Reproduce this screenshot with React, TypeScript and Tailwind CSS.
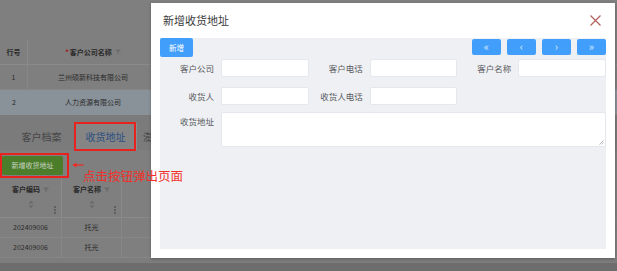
import React from 'react';

const font = "font-['Noto_Sans_CJK_SC','Noto_Sans',sans-serif]";

function SortIcon() {
  return (
    <svg width="6" height="9" viewBox="0 0 6 9" className="block">
      <path d="M3 0.5 L5.5 3.5 H0.5 Z" fill="#6a6a6a" />
      <path d="M3 8.5 L5.5 5.5 H0.5 Z" fill="#6a6a6a" />
    </svg>
  );
}

function FilterIcon() {
  return (
    <svg width="6" height="6" viewBox="0 0 6 6" className="inline-block ml-[3px]">
      <path d="M0 0.5 H6 L3.6 3.2 V5.6 L2.4 5 V3.2 Z" fill="#6c6c6c" />
    </svg>
  );
}

function Dots() {
  return (
    <svg width="2" height="8" viewBox="0 0 2 8" className="block">
      <circle cx="1" cy="1" r="0.8" fill="#3a3a3a" />
      <circle cx="1" cy="4" r="0.8" fill="#3a3a3a" />
      <circle cx="1" cy="7" r="0.8" fill="#3a3a3a" />
    </svg>
  );
}

function Field({ label, wide }: { label: string; wide?: boolean }) {
  return (
    <div className={`flex ${wide ? 'col-span-3 items-start' : 'items-center'}`}>
      <span
        className={`w-[61px] shrink-0 pr-[7px] text-right text-[8.5px] text-[#585a5e] leading-none ${
          wide ? 'pt-[5px]' : ''
        }`}
      >
        {label}
      </span>
      {wide ? (
        <div className="relative flex-1 h-[35px] bg-white border border-[#e4e7ed] rounded-[2px]">
          <svg width="5" height="5" viewBox="0 0 5 5" className="absolute right-[1px] bottom-[1px]">
            <path d="M4.5 0.5 L0.5 4.5 M4.5 2.5 L2.5 4.5" stroke="#9a9a9a" strokeWidth="0.7" />
          </svg>
        </div>
      ) : (
        <div className="flex-1 h-[18px] bg-white border border-[#e4e7ed] rounded-[2px]" />
      )}
    </div>
  );
}

export default function App() {
  const pager = ['«', '‹', '›', '»'];

  return (
    <div className={`relative w-[617px] h-[271px] overflow-hidden bg-[#7f7f7f] ${font}`}>
      {/* dimmed page underneath */}
      <div className="flex flex-col w-[617px] text-[#2a2a2a]">
        <div className="h-[40px]" />
        <div className="flex h-[25px] items-center border-b border-[#8a8a8a] text-[7px] font-bold">
          <div className="w-[28px] h-full flex items-center justify-center border-r border-[#8a8a8a]">行号</div>
          <div className="w-[130px] flex items-center justify-center">
            <span className="text-[#a01818] mr-[1px]">*</span>客户公司名称
            <FilterIcon />
          </div>
        </div>
        <div className="flex h-[25px] items-center border-b border-[#878787] text-[7px]">
          <div className="w-[28px] h-full flex items-center justify-center border-r border-[#878787]">1</div>
          <div className="w-[130px] text-center">兰州硕新科技有限公司</div>
        </div>
        <div className="flex h-[25px] items-center bg-[#899199] text-[7px]">
          <div className="w-[28px] text-center">2</div>
          <div className="w-[130px] text-center">人力资源有限公司</div>
        </div>
        <div className="flex h-[35px] items-end bg-[#7b7b7b] text-[10px] text-[#454545]">
          <div className="w-[75px] h-[27px] flex items-center justify-center pl-[8px]">客户档案</div>
          <div className="w-[61px] h-[27px] flex items-center justify-center bg-[#858585] text-[#2c4f82]">收货地址</div>
          <div className="w-[20px] h-[27px] flex items-center pl-[6px] border-l border-[#8e8e8e]">澎</div>
        </div>
        <div className="h-[28px] pl-[2px] pt-[6px]">
          <div className="w-[61px] h-[19px] flex items-center justify-center bg-[#4b7d2b] text-[7px] text-[#c9d3c2] rounded-[2px]">
            新增收货地址
          </div>
        </div>
        <div className="flex h-[40px] border-b border-[#8a8a8a] text-[7px] font-bold leading-none">
          <div className="relative w-[62px] border-r border-[#8a8a8a] flex flex-col items-center pt-[8px]">
            <div className="flex items-center">客户编码<FilterIcon /></div>
            <div className="mt-[7px]"><SortIcon /></div>
            <div className="absolute right-[5px] top-[28px]"><Dots /></div>
          </div>
          <div className="relative w-[60px] border-r border-[#8a8a8a] flex flex-col items-center pt-[8px]">
            <div className="flex items-center">客户名称<FilterIcon /></div>
            <div className="mt-[7px]"><SortIcon /></div>
            <div className="absolute right-[5px] top-[28px]"><Dots /></div>
          </div>
        </div>
        {['202409006', '202409006'].map((code, i) => (
          <div key={i} className="flex h-[20px] items-center border-b border-[#878787] text-[7px]">
            <div className="w-[62px] h-full flex items-center justify-center border-r border-[#878787]">{code}</div>
            <div className="w-[60px] h-full flex items-center justify-center border-r border-[#878787]">托光</div>
          </div>
        ))}
        <div className="h-[5px] bg-[#7d7d7d]" />
        <div className="h-[20px] bg-[#6d6d6d]" />
      </div>

      {/* dialog */}
      <div className="absolute left-[151px] top-[3px] w-[464px] h-[255px] bg-white flex flex-col shadow-[0_1px_3px_rgba(0,0,0,0.25)]">
        <div className="h-[35px] flex items-center justify-between pl-[12px] pr-[14px]">
          <span className="text-[11px] text-[#3a3a3a] leading-none">新增收货地址</span>
          <svg width="11" height="11" viewBox="0 0 11 11">
            <path d="M0.5 0.5 L10.5 10.5 M10.5 0.5 L0.5 10.5" stroke="#b0615c" strokeWidth="1.2" />
          </svg>
        </div>
        <div className="mx-[9px] h-[211px] bg-[#eff0f4] flex flex-col">
          <div className="flex justify-between items-start">
            <div className="w-[33px] h-[19px] flex items-center justify-center bg-[#419efa] text-white text-[7.5px] rounded-[2px]">
              新增
            </div>
            <div className="flex gap-[6px] pt-[1px]">
              {pager.map((p) => (
                <div
                  key={p}
                  className="w-[29px] h-[16px] flex items-center justify-center bg-[#419efa] text-[#dcecff] text-[11px] rounded-[2px] leading-none pb-[1px]"
                >
                  {p}
                </div>
              ))}
            </div>
          </div>
          <div className="grid grid-cols-3 gap-y-[10px] mt-[2px]">
            <Field label="客户公司" />
            <Field label="客户电话" />
            <Field label="客户名称" />
            <Field label="收货人" />
            <Field label="收货人电话" />
            <div />
          </div>
          <div className="grid grid-cols-3 mt-[7px]">
            <Field label="收货地址" wide />
          </div>
        </div>
      </div>

      {/* annotations */}
      <div className="absolute left-[74px] top-[122px] w-[62px] h-[29px] border-2 border-[#e8231f]" />
      <div className="absolute left-0 top-[153px] w-[69px] h-[25px] border-2 border-[#e8231f]" />
      <svg className="absolute left-[72px] top-[161px]" width="12" height="8" viewBox="0 0 12 8">
        <path d="M1 4 H11.5" stroke="#ef2a24" strokeWidth="1.3" />
        <path d="M0.5 4 L4.5 1.5 L4.5 6.5 Z" fill="#ef2a24" />
      </svg>
      <div className="absolute left-[83px] top-[170px] text-[12.5px] leading-none text-[#f2302b]">
        点击按钮弹出页面
      </div>
    </div>
  );
}
